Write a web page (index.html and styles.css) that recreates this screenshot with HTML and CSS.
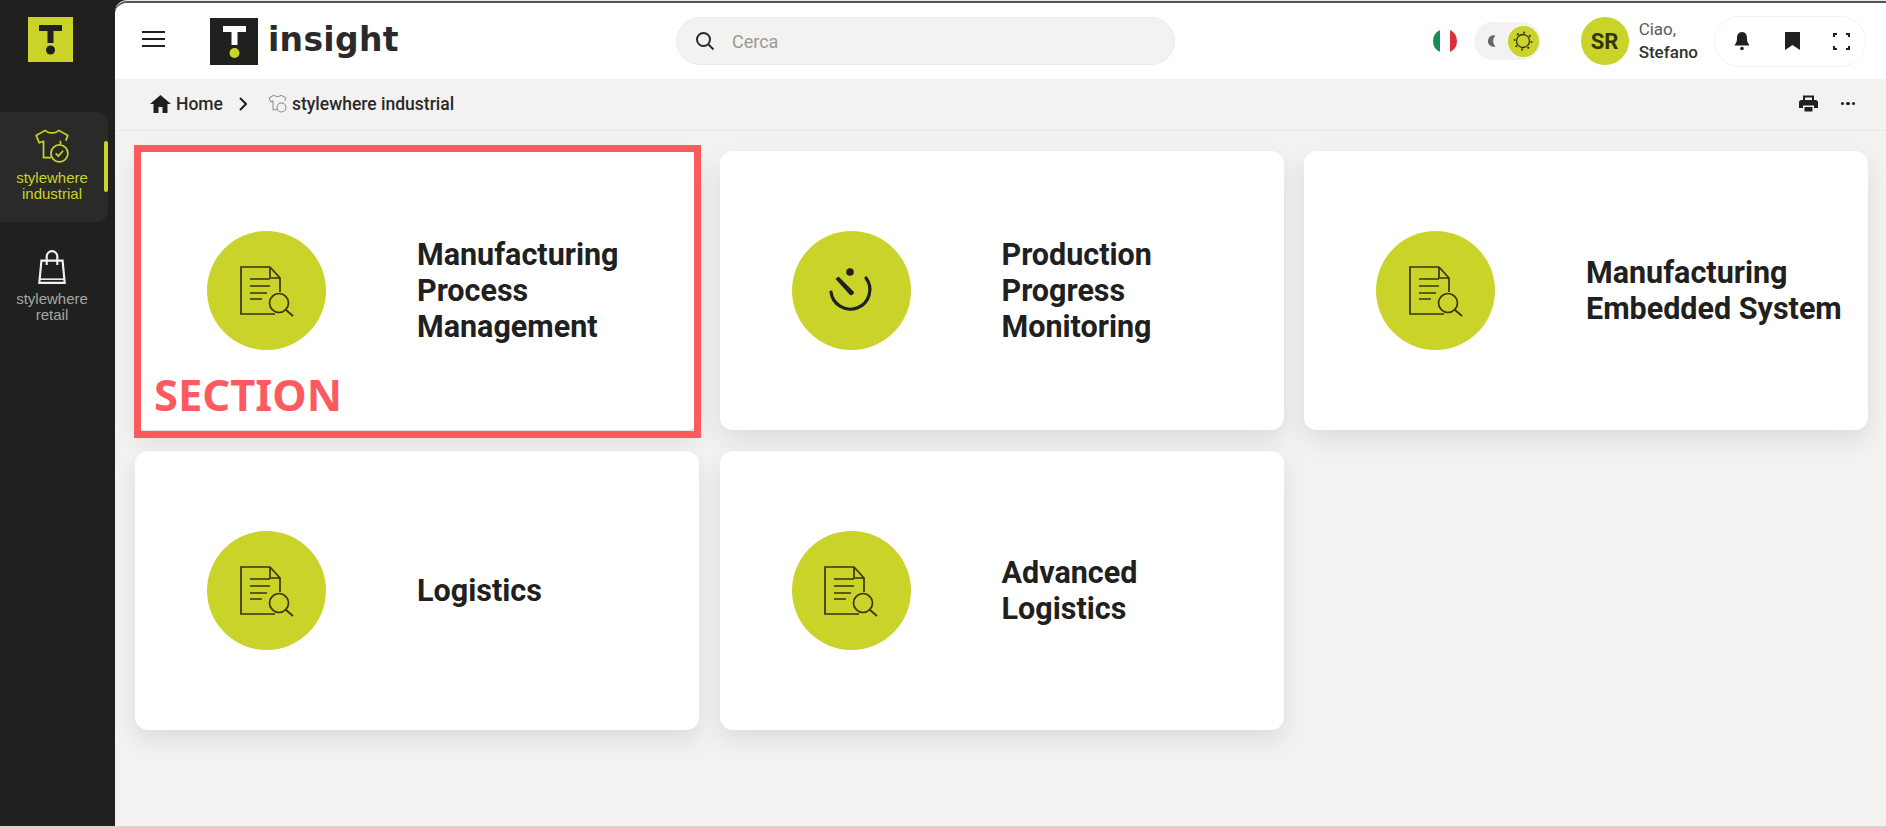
FILE: index.html
```html
<!DOCTYPE html>
<html>
  <head>
    <meta charset="utf-8" />
    <title>Temera Insight</title>
    <link rel="stylesheet" href="styles.css">
  </head>
  <body>
    <div class="app">
      <aside class="sidebar">
        <svg class="side-logo" viewBox="0 0 45 45">
          <rect width="45" height="45" fill="#c9d32a"/>
          <path d="M11 8H34V14H25.5V26H19.5V14H11Z" fill="#20201e"/>
          <circle cx="22.5" cy="33" r="4.5" fill="#20201e"/>
        </svg>
        <a class="side-item active">
          <svg class="side-icon" viewBox="0 0 34 34" fill="none" stroke="currentColor" stroke-width="1.6" stroke-linejoin="round">
            <path d="M11 2L2 7L5 14L9 12.500V28H16M23 2L32 7L30 12M11 2C12 5.500 22 5.500 23 2M25 12V15"/>
            <circle cx="24" cy="24" r="8"/>
            <path d="M20.500 24L23 26.500L27.500 21.500"/>
          </svg>
          <span>stylewhere<br>industrial</span>
        </a>
        <a class="side-item">
          <svg class="side-icon" viewBox="0 0 34 34" fill="none" stroke="currentColor" stroke-width="2">
            <path d="M7 11H27L29 32H5Z"/>
            <path d="M5 28.500H29" stroke-width="1.500"/>
            <path d="M12 15V7A5 5 0 0 1 22 7V15"/>
          </svg>
          <span>stylewhere<br>retail</span>
        </a>
      </aside>

      <main class="main">
        <header class="topbar">
          <div class="burger"><i></i><i></i><i></i></div>
          <svg class="brand-mark" viewBox="0 0 48 47">
            <rect width="48" height="47" fill="#20201e"/>
            <path d="M13 8H36V14H27.500V27H21.500V14H13Z" fill="#fff"/>
            <circle cx="24.500" cy="35" r="5" fill="#c9d32a"/>
          </svg>
          <span class="brand-name">insight</span>

          <div class="search">
            <svg width="20" height="20" viewBox="0 0 20 20" fill="none" stroke="#2a2a2a" stroke-width="2">
              <circle cx="8.500" cy="8.500" r="6.500"/>
              <path d="M13.500 13.500L18.500 18.500"/>
            </svg>
            <span>Cerca</span>
          </div>

          <div class="top-right">
            <svg class="flag" viewBox="0 0 26 24">
              <path d="M8 1.100A12 12 0 0 0 8 22.900Z" fill="#1c8a5a"/>
              <path d="M18 1.100A12 12 0 0 1 18 22.900Z" fill="#d8303e"/>
            </svg>
            <div class="theme-toggle">
              <svg width="12" height="14" viewBox="0 0 12 14"><path d="M9.500 1.500A5.800 5.800 0 1 0 9.500 12.500A7.500 7.500 0 0 1 9.500 1.500Z" fill="#666"/></svg>
              <div class="sun">
                <svg width="22" height="22" viewBox="0 0 22 22" fill="none" stroke="#33330f">
                  <circle cx="11" cy="11" r="6.500" stroke-width="1.300"/>
                  <circle cx="11" cy="11" r="8.500" stroke-width="1.800" stroke-dasharray="1.800 4.875"/>
                </svg>
              </div>
            </div>
            <div class="avatar">SR</div>
            <div class="hello">Ciao,<br><b>Stefano</b></div>
            <div class="tools">
              <svg width="18" height="20" viewBox="0 0 18 20" fill="#20201e">
                <path d="M9 1C5.500 1 4 4 4 7C4 11 3 12 1.500 14.500H16.500C15 12 14 11 14 7C14 4 12.500 1 9 1Z"/>
                <circle cx="9" cy="17.500" r="1.800"/>
              </svg>
              <svg width="15" height="18" viewBox="0 0 15 18" fill="#20201e"><path d="M0 0H15V18L7.500 13L0 18Z"/></svg>
              <svg width="17" height="17" viewBox="0 0 17 17" fill="none" stroke="#20201e" stroke-width="2">
                <path d="M1 4V1H4M13 1H16V4M16 13V16H13M4 16H1V13"/>
              </svg>
            </div>
          </div>
        </header>

        <nav class="crumbs">
          <svg width="21" height="18" viewBox="0 0 21 18" fill="#20201e"><path d="M10.500 0L0 9H3.500V18H8.500V12H12.500V18H17.500V9H21Z"/></svg>
          <span class="crumb-home">Home</span>
          <svg class="crumb-sep" width="8" height="14" viewBox="0 0 8 14" fill="none" stroke="#20201e" stroke-width="2"><path d="M1 1L7 7L1 13"/></svg>
          <svg width="19" height="19" viewBox="0 0 34 34" fill="none" stroke="#8a8a8a" stroke-width="1.800" stroke-linejoin="round">
            <path d="M11 2L2 7L5 14L9 12.500V28H16M23 2L32 7L30 12M11 2C12 5.500 22 5.500 23 2"/>
            <circle cx="24" cy="24" r="8"/>
          </svg>
          <span class="crumb-page">stylewhere industrial</span>
          <div class="crumb-actions">
            <svg width="19" height="19" viewBox="0 0 19 19" fill="#20201e">
              <path d="M4 7V1.500H15V7H13V3.500H6V7Z"/>
              <path d="M2.500 6H16.500A2.500 2.500 0 0 1 19 8.500V14H15V11.500H4V14H0V8.500A2.500 2.500 0 0 1 2.500 6Z"/>
              <path d="M5.500 13H13.500V17.500H5.500Z"/>
            </svg>
            <div class="dots"><i></i><i></i><i></i></div>
          </div>
        </nav>

        <section class="cards">
          <div class="section-mark"><span>SECTION</span></div>

          <a class="card">
            <div class="circle">
              <svg class="doc-icon" viewBox="0 0 56 52"><use href="#doc"/></svg>
            </div>
            <h3>Manufacturing<br>Process<br>Management</h3>
          </a>
          <a class="card">
            <div class="circle">
              <svg width="48" height="48" viewBox="0 0 48 48" fill="none" stroke="#20201e">
                <circle cx="23" cy="5" r="3.800" fill="#20201e" stroke="none"/>
                <path d="M8.500 12L11.500 9.500L27 25A3 3 0 0 1 23 28Z" fill="#20201e" stroke="none"/>
                <path d="M4 25A19.500 19.500 0 1 0 39 11" stroke-width="3.200" stroke-linecap="round"/>
              </svg>
            </div>
            <h3>Production<br>Progress<br>Monitoring</h3>
          </a>
          <a class="card">
            <div class="circle">
              <svg class="doc-icon" viewBox="0 0 56 52"><use href="#doc"/></svg>
            </div>
            <h3>Manufacturing<br>Embedded System</h3>
          </a>
          <a class="card">
            <div class="circle">
              <svg class="doc-icon" viewBox="0 0 56 52"><use href="#doc"/></svg>
            </div>
            <h3>Logistics</h3>
          </a>
          <a class="card">
            <div class="circle">
              <svg class="doc-icon" viewBox="0 0 56 52"><use href="#doc"/></svg>
            </div>
            <h3>Advanced<br>Logistics</h3>
          </a>
        </section>
      </main>
    </div>

    <svg class="sprite">
      <symbol id="doc" viewBox="0 0 56 52">
        <g fill="none" stroke="#33360f" stroke-width="1.700">
          <path d="M31 2H2V49H36"/>
          <path d="M31 2L41 13V27M31 2V13H41"/>
          <circle cx="40" cy="38" r="9.500"/>
          <path d="M47 45L54 51"/>
          <path d="M11 14H31M11 21H31M11 28H28M11 34H23"/>
        </g>
      </symbol>
    </svg>
  </body>
</html>
```

FILE: styles.css
```css
* {
  box-sizing: border-box;
}
html,
body {
  height: 100%;
}
body {
  margin: 0;
  overflow: hidden;
  background-color: #d8d8d6;
  font-family: Roboto, "Liberation Sans", sans-serif;
  color: #20201e;
}
.sprite {
  display: none;
}
.app {
  display: flex;
  height: 826px;
  background-color: #20201e;
}

/* left rail */
.sidebar {
  width: 115px;
  flex-shrink: 0;
  padding-top: 17px;
  background-color: #20201e;
}
.side-logo {
  display: block;
  width: 45px;
  height: 45px;
  margin: 0 0 50px 28px;
}
.side-item {
  display: flex;
  flex-direction: column;
  align-items: center;
  width: 108px;
  height: 110px;
  margin-bottom: 11px;
  padding: 16px 4px 0 0;
  border-radius: 0 12px 12px 0;
  color: #a6a6a4;
  position: relative;
}
.side-item span {
  margin-top: 6px;
  font-family: "Liberation Sans", sans-serif;
  font-size: 15px;
  line-height: 16px;
  text-align: center;
}
.side-icon {
  width: 36px;
  height: 36px;
}
.side-item svg {
  color: #f2f2f0;
}
.side-item.active {
  background-color: #2a2a28;
  color: #c9d32a;
}
.side-item.active svg {
  color: #c9d32a;
}
.side-item.active::after {
  content: "";
  position: absolute;
  right: 0;
  top: 29px;
  width: 4px;
  height: 51px;
  border-radius: 2px;
  background-color: #c9d32a;
}

/* main column */
.main {
  flex: 1;
  margin-top: 3px;
  border-top-left-radius: 12px;
  overflow: hidden;
  background-color: #f3f2f0;
  box-shadow: 0 -2px 0 #55564f, 0 -3px 0 #e8e8e8;
}
.topbar {
  display: flex;
  align-items: center;
  height: 76px;
  padding: 0 20px 0 27px;
  background-color: #fff;
}
.burger {
  display: flex;
  flex-direction: column;
  gap: 5px;
  width: 23px;
  margin-bottom: 5px;
}
.burger i {
  height: 2px;
  background-color: #20201e;
}
.brand-mark {
  width: 48px;
  height: 47px;
  margin-left: 45px;
}
.brand-name {
  margin: 0 0 4px 10px;
  width: 132px;
  font-family: "DejaVu Sans", sans-serif;
  font-weight: 700;
  font-size: 33px;
  letter-spacing: 0.3px;
  color: #2a2a2a;
}
.search {
  display: flex;
  align-items: center;
  gap: 17px;
  width: 499px;
  height: 48px;
  margin-left: 276px;
  padding-left: 18px;
  border: 1px solid #ebeae7;
  border-radius: 24px;
  background-color: #f3f2f0;
  font-size: 18px;
  color: #999;
}
.top-right {
  display: flex;
  align-items: center;
  margin-left: auto;
}
.flag {
  width: 26px;
  height: 24px;
}
.theme-toggle {
  display: flex;
  align-items: center;
  justify-content: space-between;
  width: 67px;
  height: 38px;
  margin-left: 16px;
  padding: 0 2px 0 12px;
  border-radius: 19px;
  background-color: #f3f2f0;
}
.sun {
  display: flex;
  align-items: center;
  justify-content: center;
  width: 31px;
  height: 31px;
  border-radius: 50%;
  background-color: #c9d32a;
}
.avatar {
  display: flex;
  align-items: center;
  justify-content: center;
  width: 48px;
  height: 48px;
  margin-left: 40px;
  border-radius: 50%;
  background-color: #c9d32a;
  font-weight: 700;
  font-size: 22px;
  color: #33360f;
}
.hello {
  margin-left: 10px;
  font-size: 17px;
  line-height: 23px;
  color: #5c5c5c;
}
.hello b {
  font-weight: 500;
  color: #33332f;
}
.tools {
  display: flex;
  align-items: center;
  justify-content: space-between;
  width: 152px;
  height: 51px;
  margin-left: 16px;
  padding: 0 15px 0 18px;
  border: 1px solid #f1f1ef;
  border-radius: 26px;
}

/* breadcrumb strip */
.crumbs {
  display: flex;
  align-items: center;
  height: 52px;
  padding: 0 31px 2px 35px;
  border-bottom: 1px solid #e8e7e5;
  font-weight: 500;
  font-size: 17.5px;
  color: #2a2a2a;
}
.crumb-home {
  margin-left: 5px;
}
.crumb-sep {
  margin: 0 21px 0 16px;
}
.crumb-page {
  margin-left: 5px;
}
.crumb-actions {
  display: flex;
  align-items: center;
  gap: 23px;
  margin-left: auto;
}
.dots {
  display: flex;
  gap: 2px;
}
.dots i {
  width: 3.5px;
  height: 3.5px;
  border-radius: 50%;
  background-color: #20201e;
}

/* section cards */
.cards {
  display: grid;
  grid-template-columns: repeat(3, 564px);
  grid-auto-rows: 279px;
  gap: 21px 20.5px;
  padding: 20px 0 0 20px;
  position: relative;
}
.card {
  display: flex;
  align-items: center;
  padding-left: 72px;
  border-radius: 13px;
  background-color: #fff;
  box-shadow: 0 10px 24px rgba(0, 0, 0, 0.09);
}
.circle {
  display: flex;
  align-items: center;
  justify-content: center;
  flex-shrink: 0;
  width: 119px;
  height: 119px;
  border-radius: 50%;
  background-color: #c9d32a;
}
.doc-icon {
  width: 56px;
  height: 52px;
}
.card h3 {
  margin: 0 0 0 91px;
  font-weight: 700;
  font-size: 30.5px;
  line-height: 36px;
  color: #20201e;
}

/* annotation drawn over the first card */
.section-mark {
  position: absolute;
  left: 19px;
  top: 14px;
  width: 567px;
  height: 293px;
  display: flex;
  align-items: flex-end;
  padding: 0 0 13px 13px;
  border: 7px solid #fb5a5f;
  z-index: 1;
}
.section-mark span {
  font-family: "Noto Sans", sans-serif;
  font-weight: 700;
  font-size: 43.5px;
  line-height: 48px;
  color: #fb5a5f;
}
```
